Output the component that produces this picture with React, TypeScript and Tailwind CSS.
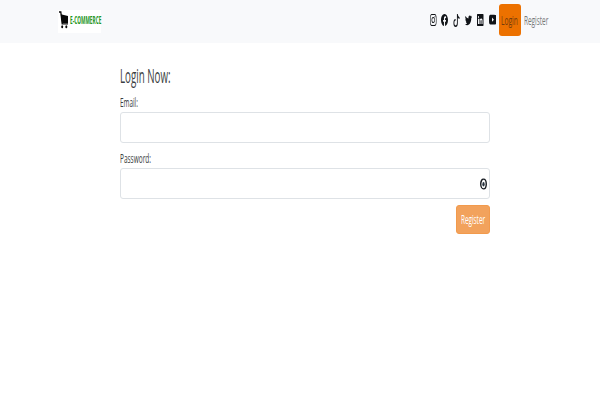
import React from "react";
import { BsInstagram, BsFacebook, BsTiktok, BsTwitter, BsLinkedin, BsYoutube } from "react-icons/bs";

const socials = [
  { Icon: BsInstagram, size: "h-[12px] w-[6.5px]" },
  { Icon: BsFacebook, size: "h-[12px] w-[7px]" },
  { Icon: BsTiktok, size: "h-[13px] w-[7px]" },
  { Icon: BsTwitter, size: "h-[12px] w-[7px]" },
  { Icon: BsLinkedin, size: "h-[12px] w-[6.5px]" },
  { Icon: BsYoutube, size: "h-[14px] w-[7.5px]" },
];

function Logo() {
  return (
    <div className="flex h-[23px] w-[43px] items-center bg-white pb-[3px] pl-px">
      <svg viewBox="0 0 10 18" className="h-[18px] w-[10px] shrink-0" aria-hidden="true">
        <path d="M0 1h1.8L3.2 12.8H9" fill="none" stroke="#080808" strokeWidth="1.3" />
        <path d="M1.8 3.2 9 5v7H3Z" fill="#080808" />
        <ellipse cx="3.2" cy="15.8" rx="1" ry="1.5" fill="#080808" />
        <ellipse cx="7.3" cy="15.8" rx="1" ry="1.5" fill="#080808" />
      </svg>
      <span className="mb-[2px] ml-px w-[31px] whitespace-nowrap text-[11px] leading-none font-bold text-[#1b951b]">
        <span className="inline-block origin-left scale-x-[0.43]">E-COMMERCE</span>
      </span>
    </div>
  );
}

function EyeIcon() {
  return (
    <svg viewBox="0 0 7 12" className="h-[12px] w-[7px]" aria-hidden="true">
      <ellipse cx="3.5" cy="6" rx="2.75" ry="4.9" fill="none" stroke="#151a20" strokeWidth="1.4" />
      <ellipse cx="3.5" cy="6.2" rx="1.15" ry="2.3" fill="#26323e" />
    </svg>
  );
}

export default function App() {
  return (
    <div className="h-[400px] w-[600px] overflow-hidden bg-white font-['Open_Sans',sans-serif] text-[13px] text-[#3a3e42]">
      <nav className="flex h-[43px] items-start bg-[#f8f9fb] pr-[50px] pl-[58px]">
        <div className="pt-[10px]">
          <Logo />
        </div>
        <div className="ml-auto flex h-[40px] items-center gap-[4.9px] text-[#111418]">
          {socials.map(({ Icon, size }, i) => (
            <Icon key={i} preserveAspectRatio="none" className={size} />
          ))}
        </div>
        <a className="mt-1 ml-[2.5px] flex h-8 w-[22.5px] items-center rounded-[3px] bg-[#ec7100] pt-px pl-[2.5px] whitespace-nowrap text-[#733b0c]">
          <span className="block w-0"><span className="inline-block origin-left scale-x-[0.51]">Login</span></span>
        </a>
        <a className="mt-1 ml-[3px] flex h-8 w-[26px] items-center pt-px whitespace-nowrap text-[#777879]">
          <span className="block w-0"><span className="inline-block origin-left scale-x-[0.495]">Register</span></span>
        </a>
      </nav>
      <form className="ml-[120px] flex w-[370px] flex-col pt-[22px]">
        <h1 className="h-[28px] text-[19.5px] leading-[22px]">
          <span className="inline-block origin-left scale-x-[0.5]">Login Now:</span>
        </h1>
        <label className="h-[19px] leading-[19px]">
          <span className="inline-block origin-left scale-x-[0.49]">Email:</span>
        </label>
        <input aria-label="Email" className="h-[31px] rounded-[3px] border border-[#dee2e6]" />
        <label className="mt-[6px] h-[19px] leading-[19px]">
          <span className="inline-block origin-left scale-x-[0.5]">Password:</span>
        </label>
        <div className="flex h-[31px] items-center justify-end rounded-[3px] border border-[#dee2e6] pr-[2px]">
          <EyeIcon />
        </div>
        <button type="button" className="mt-[6px] flex h-[29px] w-[34px] items-center self-end rounded-[3px] border border-[#f29a4c] bg-[#f2a25c] pl-[3.5px] whitespace-nowrap text-white">
          <span className="block w-0"><span className="inline-block origin-left scale-x-[0.49]">Register</span></span>
        </button>
      </form>
    </div>
  );
}
